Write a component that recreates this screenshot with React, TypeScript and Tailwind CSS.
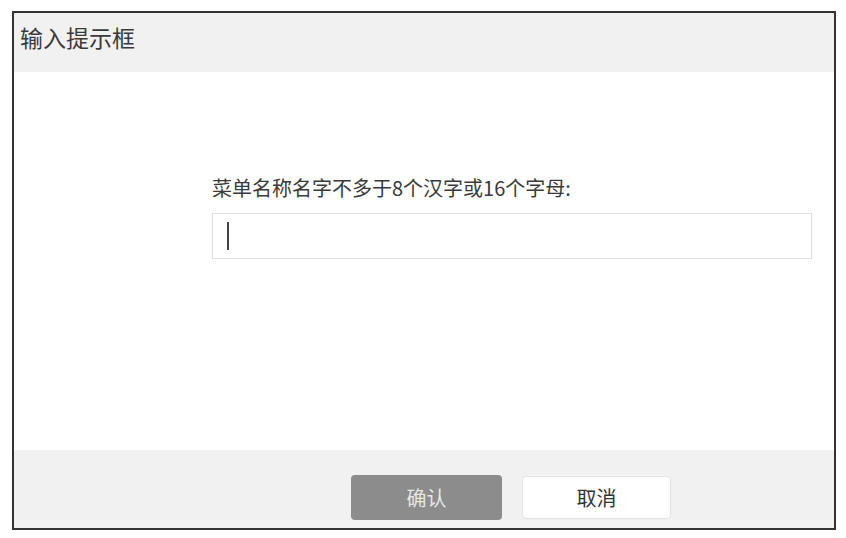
import React from "react";

const font = { fontFamily: '"Noto Sans CJK SC", "Noto Sans", sans-serif' };

export default function App() {
  return (
    <div className="w-[846px] h-[538px] bg-white pt-[11px] pl-[12px]" style={font}>
      <div className="w-[824px] h-[519px] border-2 border-[#333] flex flex-col">
        <div className="h-[59px] bg-[#f1f1f1] pl-[6px] pt-[7px]">
          <span className="text-[23px] leading-[34px] text-[#3a3a3a]">输入提示框</span>
        </div>

        <div className="flex-1 bg-white pl-[198px] pt-[101px]">
          <div className="text-[20px] leading-[30px] text-[#3a3a3a]">
            菜单名称名字不多于8个汉字或16个字母:
          </div>
          <div className="mt-[10px] w-[600px] h-[46px] border border-[#e0e0e0] bg-white flex items-center pl-[14px]">
            <span className="block w-[2px] h-[28px] bg-[#444]" />
          </div>
        </div>

        <div className="h-[78px] bg-[#f1f1f1] flex items-start gap-[20px] pl-[337px] pt-[25px]">
          <button className="w-[151px] h-[45px] rounded-[4px] bg-[#8c8c8c] text-[20px] text-[#e6e6e6]">
            确认
          </button>
          <button className="mt-[1px] w-[149px] h-[43px] rounded-[4px] bg-white border border-[#e4e4e4] text-[20px] text-[#333]">
            取消
          </button>
        </div>
      </div>
    </div>
  );
}
